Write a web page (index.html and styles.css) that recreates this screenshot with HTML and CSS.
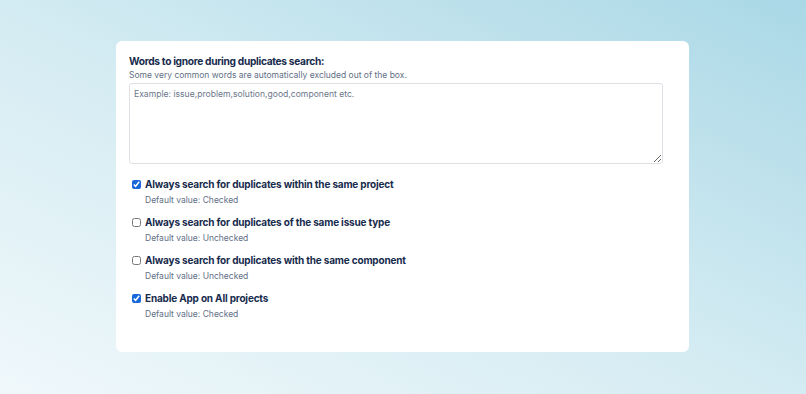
FILE: index.html
```
<!DOCTYPE html>
<html>
<head>
<meta charset="utf-8">
<link rel="stylesheet" href="styles.css">
</head>
<body>
<div class="stage">
  <div class="card">
    <div class="title">Words to ignore during duplicates search:</div>
    <div class="hint">Some very common words are automatically excluded out of the box.</div>
    <textarea class="words" placeholder="Example: issue,problem,solution,good,component etc."></textarea>
    <div class="options">
      <div class="opt">
        <label class="opt-label"><input type="checkbox" checked> <span>Always search for duplicates within the same project</span></label>
        <div class="opt-default">Default value: Checked</div>
      </div>
      <div class="opt">
        <label class="opt-label"><input type="checkbox"> <span>Always search for duplicates of the same issue type</span></label>
        <div class="opt-default">Default value: Unchecked</div>
      </div>
      <div class="opt">
        <label class="opt-label"><input type="checkbox"> <span>Always search for duplicates with the same component</span></label>
        <div class="opt-default">Default value: Unchecked</div>
      </div>
      <div class="opt">
        <label class="opt-label"><input type="checkbox" checked> <span>Enable App on All projects</span></label>
        <div class="opt-default">Default value: Checked</div>
      </div>
    </div>
  </div>
</div>
</body>
</html>
```
FILE: styles.css
```
html, body {
  margin: 0;
  padding: 0;
  width: 806px;
  height: 394px;
  overflow: hidden;
}
body {
  font-family: Inter, "Liberation Sans", sans-serif;
  background: linear-gradient(to top right, #f0f8fb 0%, #d3ebf2 50%, #aad8e6 100%);
}
.stage {
  padding-top: 41px;
  padding-left: 116px;
}
.card {
  box-sizing: border-box;
  width: 573px;
  height: 311px;
  background: #fff;
  border-radius: 6px;
  padding: 13px 13px 0 13px;
}
.title {
  font-size: 10.2px;
  font-weight: 700;
  letter-spacing: -0.32px;
  color: #172b4d;
  line-height: 14px;
  height: 14px;
}
.hint {
  font-size: 8.5px;
  color: #626f86;
  line-height: 12px;
  margin-top: 1px;
}
.words {
  display: block;
  box-sizing: border-box;
  width: 534px;
  height: 81px;
  margin-top: 2px;
  border: 1px solid #dfe1e6;
  border-radius: 3px;
  padding: 5px 4px;
  font-family: inherit;
  font-size: 8.6px;
  color: #172b4d;
  resize: vertical;
  outline: none;
}
.words::placeholder {
  color: #6b778c;
}
.options {
  display: flex;
  flex-direction: column;
  gap: 9px;
  margin-top: 13px;
}
.opt-label {
  display: flex;
  align-items: center;
  gap: 4px;
  font-size: 10px;
  font-weight: 700;
  letter-spacing: -0.18px;
  color: #172b4d;
  line-height: 15px;
  height: 15px;
}
.opt-label input {
  margin: 0 0 0 3px;
  width: 9px;
  height: 9px;
  accent-color: #1868db;
}
.opt-default {
  font-size: 8.5px;
  color: #626f86;
  line-height: 12px;
  margin-top: 2px;
  padding-left: 16px;
}
```
